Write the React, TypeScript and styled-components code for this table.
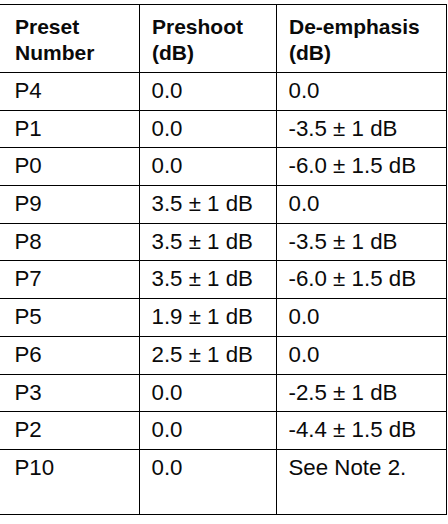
import React from "react";
import styled, { createGlobalStyle } from "styled-components";

const Global = createGlobalStyle`
  html, body { margin: 0; padding: 0; background: #ffffff; }
  body { font-family: "Liberation Sans", Arial, sans-serif; color: #0a0a0a; }
`;

const Page = styled.div`
  width: 448px;
  height: 524px;
  overflow: hidden;
  padding-top: 4px;
  box-sizing: border-box;
  background: #ffffff;
`;

const Table = styled.table`
  margin-left: -1px;
  width: 447px;
  border-collapse: collapse;
  table-layout: fixed;
  line-height: 26px;
`;

const HeadCell = styled.th<{ $first?: boolean }>`
  border: 1px solid #000;
  text-align: left;
  vertical-align: top;
  font-size: 21px;
  font-weight: 700;
  padding: 9px 0 6px ${(p) => (p.$first ? "15px" : "12px")};
  white-space: nowrap;
`;

const Cell = styled.td<{ $first?: boolean; $tall?: boolean }>`
  border: 1px solid #000;
  text-align: left;
  vertical-align: top;
  font-size: 22.3px;
  font-weight: 400;
  white-space: nowrap;
  padding: 5px 0 ${(p) => (p.$tall ? "33px" : "5.7px")}
    ${(p) => (p.$first ? "14.5px" : "11.5px")};
`;

const rows: [string, string, string][] = [
  ["P4", "0.0", "0.0"],
  ["P1", "0.0", "-3.5 ± 1 dB"],
  ["P0", "0.0", "-6.0 ± 1.5 dB"],
  ["P9", "3.5 ± 1 dB", "0.0"],
  ["P8", "3.5 ± 1 dB", "-3.5 ± 1 dB"],
  ["P7", "3.5 ± 1 dB", "-6.0 ± 1.5 dB"],
  ["P5", "1.9 ± 1 dB", "0.0"],
  ["P6", "2.5 ± 1 dB", "0.0"],
  ["P3", "0.0", "-2.5 ± 1 dB"],
  ["P2", "0.0", "-4.4 ± 1.5 dB"],
  ["P10", "0.0", "See Note 2."],
];

export default function App() {
  return (
    <Page>
      <Global />
      <Table>
        <colgroup>
          <col style={{ width: 140 }} />
          <col style={{ width: 137 }} />
          <col style={{ width: 170 }} />
        </colgroup>
        <thead>
          <tr>
            <HeadCell $first>
              Preset
              <br />
              Number
            </HeadCell>
            <HeadCell>
              Preshoot
              <br />
              (dB)
            </HeadCell>
            <HeadCell>
              De-emphasis
              <br />
              (dB)
            </HeadCell>
          </tr>
        </thead>
        <tbody>
          {rows.map((r, i) => {
            const tall = i === rows.length - 1;
            return (
              <tr key={r[0]}>
                <Cell $first $tall={tall}>
                  {r[0]}
                </Cell>
                <Cell $tall={tall}>{r[1]}</Cell>
                <Cell $tall={tall}>{r[2]}</Cell>
              </tr>
            );
          })}
        </tbody>
      </Table>
    </Page>
  );
}
